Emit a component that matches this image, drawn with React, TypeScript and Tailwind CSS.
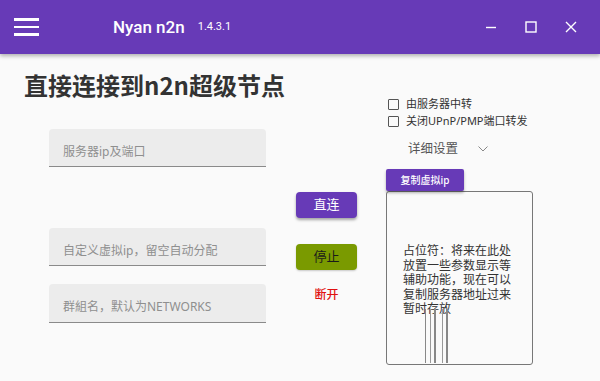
import React from "react"

// ============================================================
// 顶部标题栏
// ============================================================

const TitleBar: React.FC = () => (
  <div className="relative z-10 flex h-[54px] items-center bg-[#673ab7] pl-[14px] pr-[23px] text-white shadow-[0_2px_4px_rgba(0,0,0,0.3)] font-['Roboto',sans-serif]">
    {/* 菜单按钮 */}
    <div className="flex w-[25px] flex-col gap-[5px]">
      <span className="h-[2.5px] w-full bg-white" />
      <span className="h-[2.5px] w-full bg-white" />
      <span className="h-[2.5px] w-full bg-white" />
    </div>
    <span className="ml-[74px] text-[17px] font-medium leading-none">Nyan n2n</span>
    <span className="ml-[13px] -mt-[2px] text-[11px] leading-none">1.4.3.1</span>

    {/* 窗口按钮 */}
    <div className="ml-auto flex items-center gap-[28px]">
      <svg width="12" height="12" viewBox="0 0 12 12">
        <path d="M1 6.5h10" stroke="#fff" strokeWidth="1.4" />
      </svg>
      <svg width="12" height="12" viewBox="0 0 12 12">
        <rect x="1" y="1" width="10" height="10" fill="none" stroke="#fff" strokeWidth="1.4" />
      </svg>
      <svg width="12" height="12" viewBox="0 0 12 12">
        <path d="M1 1l10 10M11 1L1 11" stroke="#fff" strokeWidth="1.4" />
      </svg>
    </div>
  </div>
)

// ============================================================
// 子组件
// ============================================================

/** 输入框 — filled 风格 */
const FilledInput: React.FC<{ placeholder: string; className?: string }> = ({
  placeholder,
  className,
}) => (
  <div
    className={`h-[38px] w-[217px] rounded-t-[4px] border-b-[1.5px] border-[#8a8a8a] bg-[#ececec] pl-[14px] pt-[15px] ${className ?? ""}`}
  >
    <span className="block text-[12px] leading-[16px] text-[#8f8f8f]">{placeholder}</span>
  </div>
)

const CheckRow: React.FC<{ label: string }> = ({ label }) => (
  <div className="flex h-[16px] items-center pl-[2px]">
    <span className="h-[11px] w-[11px] rounded-[1px] border-[1.5px] border-[#555]" />
    <span className="ml-[7px] text-[11px] leading-[16px] text-[#333]">{label}</span>
  </div>
)

// ============================================================
// 主组件
// ============================================================

export default function App() {
  return (
    <div className="h-[381px] w-[600px] overflow-hidden bg-[#fafafa] font-['Noto_Sans','Noto_Sans_CJK_SC',sans-serif]">
      <TitleBar />

      <div className="flex">
        {/* 左侧：标题 + 输入框 */}
        <div className="w-[296px] pl-[24px] pt-[15px]">
          <h1 className="text-[24px] font-bold leading-[32px] text-[#333] font-['Noto_Sans_CJK_SC',sans-serif]">
            直接连接到n2n超级节点
          </h1>
          <div className="pl-[25px]">
            <FilledInput placeholder="服务器ip及端口" className="mt-[28px]" />
            <FilledInput placeholder="自定义虚拟ip，留空自动分配" className="mt-[61px]" />
            <FilledInput placeholder="群組名，默认为NETWORKS" className="mt-[18px] h-[39px]" />
          </div>
        </div>

        {/* 中间：操作按钮 */}
        <div className="flex w-[61px] flex-col items-center pt-[138px]">
          <button className="h-[26px] w-full rounded-[4px] bg-[#673ab7] text-[13px] text-white shadow-[0_2px_3px_rgba(0,0,0,0.35)]">
            直连
          </button>
          <button className="mt-[26px] h-[26px] w-full rounded-[4px] bg-[#7a9a00] text-[13px] text-[#1a1a1a] shadow-[0_1px_2px_rgba(0,0,0,0.2)]">
            停止
          </button>
          <span className="mt-[17px] text-[12px] font-medium leading-[16px] text-[#e01010]">断开</span>
        </div>

        {/* 右侧：选项 + 信息框 */}
        <div className="ml-[29px] w-[147px] pt-[42px]">
          <CheckRow label="由服务器中转" />
          <div className="mt-[1px]">
            <CheckRow label="关闭UPnP/PMP端口转发" />
          </div>

          <div className="mt-[8px] flex h-[24px] items-center pl-[22px]">
            <span className="text-[12.5px] leading-[24px] text-[#555]">详细设置</span>
            <svg className="ml-[20px]" width="10" height="6" viewBox="0 0 10 6">
              <path d="M0.5 0.5L5 5l4.5-4.5" fill="none" stroke="#888" strokeWidth="1" />
            </svg>
          </div>

          <button className="relative z-10 mt-[8px] h-[22px] w-[78px] rounded-[2px] bg-[#673ab7] text-[10px] font-medium text-white shadow-[0_2px_3px_rgba(0,0,0,0.3)]">
            复制虚拟ip
          </button>

          <div className="relative h-[174px] w-[147px] rounded-[3px] border border-[#777] pl-[16px] pt-[51px]">
            <p className="w-[112px] text-[12px] leading-[14.5px] text-[#333] font-['Noto_Sans_CJK_SC',sans-serif]">
              占位符：将来在此处放置一些参数显示等辅助功能，现在可以复制服务器地址过来暂时存放
            </p>
            {/* 渲染残影竖线 */}
            <span className="absolute left-[38px] top-[117px] h-[54px] w-[1px] bg-[#888]" />
            <span className="absolute left-[43px] top-[117px] h-[54px] w-[1px] bg-[#999]" />
            <span className="absolute left-[47px] top-[117px] h-[54px] w-[1.5px] bg-[#888]" />
            <span className="absolute left-[55px] top-[117px] h-[54px] w-[1px] bg-[#999]" />
            <span className="absolute left-[59px] top-[117px] h-[54px] w-[1.5px] bg-[#888]" />
          </div>
        </div>
      </div>
    </div>
  )
}
